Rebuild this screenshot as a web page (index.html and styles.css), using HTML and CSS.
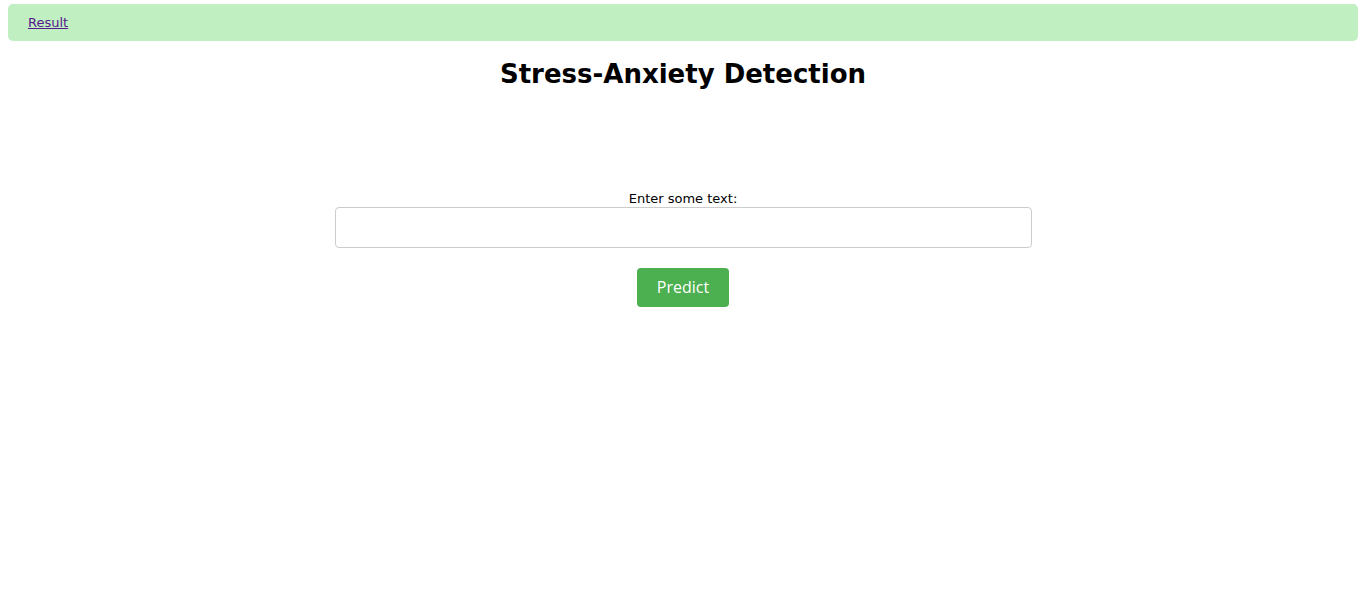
FILE: index.html
```html
<!DOCTYPE html>
<html>
<head>
<meta charset="utf-8">
<link rel="stylesheet" href="styles.css">
</head>
<body>
<nav class="navbar"><a class="nav-link" href="#">Result</a></nav>
<main class="main">
  <h1 class="title">Stress-Anxiety Detection</h1>
  <form class="form">
    <label class="label" for="t">Enter some text:</label>
    <input class="input" id="t" type="text">
    <button class="btn" type="button">Predict</button>
  </form>
</main>
</body>
</html>
```
FILE: styles.css
```css
html, body { margin: 0; padding: 0; background: #fff; }
body { font-family: "DejaVu Sans", sans-serif; color: #000; }
.navbar {
  margin: 4px 5px 0 8px;
  height: 37px;
  background: #c0efc1;
  border-radius: 5px;
  display: flex;
  align-items: center;
  padding-left: 20px;
}
.nav-link { color: #551a8b; font-size: 13px; text-decoration: underline; }
.main { display: flex; flex-direction: column; align-items: center; margin: 0 5px 0 8px; }
.title { font-size: 26px; font-weight: bold; margin: 17px 0 0; line-height: 32px; }
.form { display: flex; flex-direction: column; align-items: center; margin-top: 101px; }
.label { font-size: 13px; line-height: 16px; }
.input {
  box-sizing: border-box;
  width: 697px; height: 41px;
  border: 1px solid #ccc; border-radius: 4px;
  margin-top: 0; padding: 8px;
}
.btn {
  margin-top: 20px;
  width: 92px; height: 39px;
  padding: 0 0 2px;
  background: #4caf50; color: #fff; border: none; border-radius: 4px;
  font-family: "Open Sans", sans-serif; font-size: 16px;
}
```
